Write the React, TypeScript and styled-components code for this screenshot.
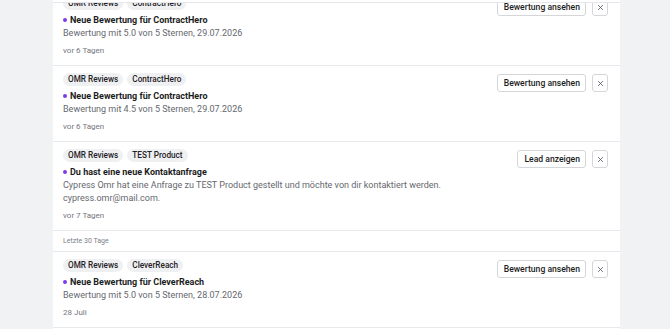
import React from 'react';
import styled, { createGlobalStyle } from 'styled-components';

const Global = createGlobalStyle`
  html, body { margin: 0; padding: 0; background: #f1f2f4; }
  body { font-family: Roboto, "Noto Sans", sans-serif; -webkit-font-smoothing: antialiased; }
  #root { height: 329px; }
`;

const Page = styled.div`
  height: 329px;
  overflow: hidden;
  display: flex;
  padding-left: 53px;
`;

const Panel = styled.div`
  width: 567px;
  background: #fff;
  position: relative;
  display: flex;
  flex-direction: column;
`;

const TopBar = styled.div`
  position: absolute;
  top: 0;
  left: 0;
  right: 0;
  height: 2px;
  background: #fff;
  border-bottom: 1px solid #e6e7ea;
  z-index: 2;
`;

const List = styled.div`
  margin-top: -10px;
  display: flex;
  flex-direction: column;
`;

const Item = styled.div`
  display: flex;
  justify-content: space-between;
  align-items: flex-start;
  padding: 7px 12px 8px 10px;
  border-bottom: 1px solid #e8e9ec;
`;

const Content = styled.div`
  display: flex;
  flex-direction: column;
`;

const Chips = styled.div`
  display: flex;
  gap: 4px;
  height: 13px;
`;

const Chip = styled.span`
  height: 13px;
  padding: 0 5px;
  border-radius: 7px;
  background: #eff0f2;
  color: #1f2126;
  font-size: 8.2px;
  font-weight: 500;
  line-height: 13px;
  white-space: nowrap;
`;

const Title = styled.div`
  margin-top: 3px;
  display: flex;
  align-items: center;
  gap: 3px;
  height: 14px;
  font-size: 9px;
  font-weight: 700;
  color: #1b1d22;
  white-space: nowrap;
`;

const Dot = styled.span`
  width: 4px;
  height: 4px;
  border-radius: 50%;
  background: #7c3aed;
  flex: none;
`;

const Body = styled.div`
  font-size: 9px;
  line-height: 13px;
  color: #65686e;
  white-space: pre-line;
`;

const Time = styled.div`
  margin-top: 5px;
  font-size: 8px;
  line-height: 12px;
  color: #73767c;
`;

const Actions = styled.div`
  display: flex;
  gap: 6px;
  padding-top: 1px;
`;

const Button = styled.button`
  height: 18px;
  padding: 0 5px 0 6px;
  border: 1px solid #d4d6da;
  border-radius: 3px;
  background: #fff;
  color: #1b1d22;
  font-family: inherit;
  font-size: 8.6px;
  font-weight: 500;
  line-height: 16px;
  white-space: nowrap;
  cursor: pointer;
`;

const Close = styled(Button)`
  width: 16px;
  padding: 0;
  display: flex;
  align-items: center;
  justify-content: center;
  color: #55585e;
`;

const Section = styled.div`
  height: 20px;
  line-height: 20px;
  padding-left: 10px;
  font-size: 7px;
  color: #7d8086;
  border-bottom: 1px solid #e6e7ea;
`;

type Entry = {
  tag: string;
  title: string;
  body: string;
  time: string;
  action: string;
};

const before: Entry[] = [
  {
    tag: 'ContractHero',
    title: 'Neue Bewertung für ContractHero',
    body: 'Bewertung mit 5.0 von 5 Sternen, 29.07.2026',
    time: 'vor 6 Tagen',
    action: 'Bewertung ansehen',
  },
  {
    tag: 'ContractHero',
    title: 'Neue Bewertung für ContractHero',
    body: 'Bewertung mit 4.5 von 5 Sternen, 29.07.2026',
    time: 'vor 6 Tagen',
    action: 'Bewertung ansehen',
  },
  {
    tag: 'TEST Product',
    title: 'Du hast eine neue Kontaktanfrage',
    body: 'Cypress Omr hat eine Anfrage zu TEST Product gestellt und möchte von dir kontaktiert werden.\ncypress.omr@mail.com.',
    time: 'vor 7 Tagen',
    action: 'Lead anzeigen',
  },
];

const after: Entry[] = [
  {
    tag: 'CleverReach',
    title: 'Neue Bewertung für CleverReach',
    body: 'Bewertung mit 5.0 von 5 Sternen, 28.07.2026',
    time: '28 Juli',
    action: 'Bewertung ansehen',
  },
];

const XIcon = () => (
  <svg width="7" height="7" viewBox="0 0 10 10" fill="none" stroke="currentColor" strokeWidth="1.2" strokeLinecap="round">
    <path d="M2 2l6 6M8 2l-6 6" />
  </svg>
);

const Notification = ({ e }: { e: Entry }) => (
  <Item>
    <Content>
      <Chips>
        <Chip>OMR Reviews</Chip>
        <Chip>{e.tag}</Chip>
      </Chips>
      <Title>
        <Dot />
        {e.title}
      </Title>
      <Body>{e.body}</Body>
      <Time>{e.time}</Time>
    </Content>
    <Actions>
      <Button>{e.action}</Button>
      <Close aria-label="Schließen">
        <XIcon />
      </Close>
    </Actions>
  </Item>
);

export default function App() {
  return (
    <>
      <Global />
      <Page>
        <Panel>
          <TopBar />
          <List>
            {before.map((e, i) => (
              <Notification key={i} e={e} />
            ))}
            <Section>Letzte 30 Tage</Section>
            {after.map((e, i) => (
              <Notification key={i} e={e} />
            ))}
          </List>
        </Panel>
      </Page>
    </>
  );
}
